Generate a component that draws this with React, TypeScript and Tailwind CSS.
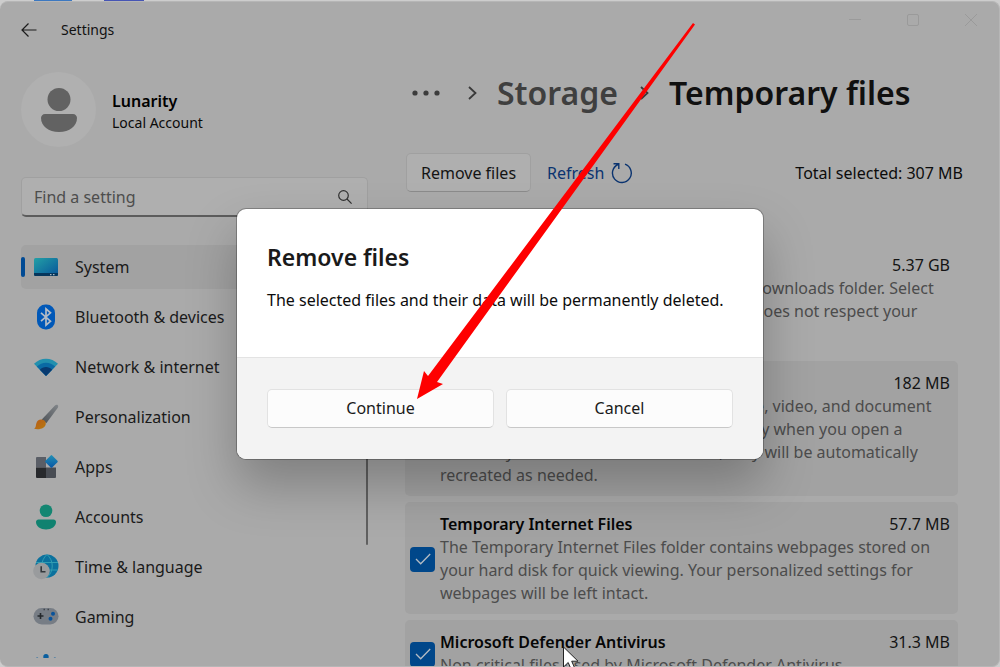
import type { ReactNode } from 'react';
import { useState } from 'react';

type TempFile = {
  id: string;
  name: string;
  size: string;
  lines: string[];
};

const files: TempFile[] = [
  {
    id: 'downloads',
    name: 'Downloads',
    size: '5.37 GB',
    lines: [
      'Warning: These are files in your personal Downloads folder. Select',
      "this if you'd like to delete everything. This does not respect your",
      'Storage Sense configuration.',
    ],
  },
  {
    id: 'thumbnails',
    name: 'Thumbnails',
    size: '182 MB',
    lines: [
      'Windows keeps copies of all of your picture, video, and document',
      'thumbnails so they can be displayed quickly when you open a',
      'folder. If you delete these thumbnails, they will be automatically',
      'recreated as needed.',
    ],
  },
  {
    id: 'internet',
    name: 'Temporary Internet Files',
    size: '57.7 MB',
    lines: [
      'The Temporary Internet Files folder contains webpages stored on',
      'your hard disk for quick viewing. Your personalized settings for',
      'webpages will be left intact.',
    ],
  },
  {
    id: 'defender',
    name: 'Microsoft Defender Antivirus',
    size: '31.3 MB',
    lines: ['Non critical files used by Microsoft Defender Antivirus'],
  },
];

const SystemIcon = () => (
  <svg viewBox="0 0 26 26" className="size-[26px]">
    <defs>
      <linearGradient id="sys" x1="0" y1="0" x2="1" y2="1">
        <stop offset="0" stopColor="#23a0a6" />
        <stop offset="1" stopColor="#07549a" />
      </linearGradient>
    </defs>
    <rect x="1" y="4" width="24" height="18" rx="1.5" fill="url(#sys)" />
    <path d="M1 19h24v1.5a1.5 1.5 0 0 1-1.5 1.5h-21A1.5 1.5 0 0 1 1 20.500z" fill="#06365c" />
    <path d="M17 20h1.500v1.200H17zM20 20h1.500v1.200H20z" fill="#a9b8c2" />
  </svg>
);

const BluetoothIcon = () => (
  <svg viewBox="0 0 26 26" className="size-[26px]">
    <rect x="4" y="0.500" width="18" height="25" rx="8.500" fill="#0058b8" />
    <path d="M8 8.800l9.500 8.400-4.500 4V4.800l4.500 4-9.500 8.400" fill="none" stroke="#b4bcc6" strokeWidth="1.700" />
  </svg>
);

const NetworkIcon = () => (
  <svg viewBox="0 0 26 26" className="size-[26px]">
    <path d="M13 22L1 9.800C7.500 2.900 18.500 2.900 25 9.800z" fill="#2290ae" />
    <path d="M13 22L3.800 12.600C9 7.300 17 7.300 22.200 12.600z" fill="#0a6aa4" />
    <path d="M13 22L6.800 15.700C10.300 12.200 15.700 12.200 19.200 15.700z" fill="#083a70" />
  </svg>
);

const BrushIcon = () => (
  <svg viewBox="0 0 26 26" className="size-[26px]">
    <defs>
      <linearGradient id="handle" x1="1" y1="0" x2="0" y2="1">
        <stop offset="0" stopColor="#818589" />
        <stop offset="1" stopColor="#4d5257" />
      </linearGradient>
      <linearGradient id="bristle" x1="0" y1="0" x2="1" y2="1">
        <stop offset="0" stopColor="#b85a18" />
        <stop offset="1" stopColor="#b67a10" />
      </linearGradient>
    </defs>
    <path d="M24.800 1.200c.6.700.5 1.700 0 2.500L13.300 19.200 8.800 15.500 22 1.500c.8-.8 2.100-1 2.800-.3z" fill="url(#handle)" />
    <path d="M8.600 15.400c2.600.2 4.300 1.900 4.200 4.300C12.500 23.900 7 26.200 1 24.800c1.900-1.100 1.700-3.100 2.300-5.400.7-2.600 2.600-4.200 5.300-4z" fill="url(#bristle)" />
  </svg>
);

const AppsIcon = () => (
  <svg viewBox="0 0 26 26" className="size-[26px]">
    <defs>
      <linearGradient id="diamond" x1="0" y1="0" x2="1" y2="1">
        <stop offset="0" stopColor="#2391b5" />
        <stop offset="1" stopColor="#0755a5" />
      </linearGradient>
    </defs>
    <path d="M4 3h9v10.500H3V4a1 1 0 0 1 1-1z" fill="#5a5e66" />
    <path d="M3 13.500h10V24H4a1 1 0 0 1-1-1z" fill="#27292c" />
    <path d="M13 13.500h10V23a1 1 0 0 1-1 1h-9z" fill="#484c53" />
    <rect x="13.700" y="2.700" width="9.500" height="9.500" rx="1" fill="url(#diamond)" transform="rotate(45 18.450 7.450)" />
  </svg>
);

const AccountsIcon = () => (
  <svg viewBox="0 0 26 26" className="size-[26px]">
    <circle cx="13" cy="6.700" r="6.300" fill="#148672" />
    <path d="M5.500 15.500h15c1.400 0 2.500 1.100 2.500 2.500 0 4.500-4.500 7.500-10 7.500S3 22.500 3 18c0-1.400 1.100-2.500 2.500-2.500z" fill="#108270" />
  </svg>
);

const TimeIcon = () => (
  <svg viewBox="0 0 26 26" className="size-[26px]">
    <circle cx="14" cy="12" r="11.500" fill="#0b719d" />
    <path d="M3 8.500h22M3.500 16h21M14 .5c-7 6-7 17 0 23M14 .5c7 6 7 17 0 23" fill="none" stroke="#319db2" strokeWidth="1" />
    <circle cx="8.500" cy="17" r="8.300" fill="#999b9d" />
    <path d="M8.200 12.200v5.500H12.500" fill="none" stroke="#33383c" strokeWidth="1.600" />
  </svg>
);

const GamingIcon = () => (
  <svg viewBox="0 0 26 26" className="size-[26px]">
    <rect x="0.500" y="4" width="25" height="16.500" rx="8.250" fill="#777d85" />
    <path d="M7.500 9v6M4.500 12h6" stroke="#24282c" strokeWidth="1.600" />
    <path d="M10.500 5.500h1.500M14.500 5.500h1.500" stroke="#40454b" strokeWidth="1.300" />
    <circle cx="20" cy="9.800" r="2" fill="#0a539b" />
    <circle cx="17.500" cy="14.800" r="2" fill="#0a539b" />
  </svg>
);

const AccessibilityIcon = () => (
  <svg viewBox="0 0 26 26" className="size-[26px]">
    <circle cx="13" cy="2.800" r="2.700" fill="#0a5f9f" />
    <path d="M4 4.800l8.500 4h1l8.500-4" fill="none" stroke="#0a5f9f" strokeWidth="2.600" strokeLinecap="round" />
    <path d="M13 8v7l-4 8M13 15l4 8" fill="none" stroke="#0a5f9f" strokeWidth="3" strokeLinecap="round" />
  </svg>
);

const nav: { label: string; icon: ReactNode }[] = [
  { label: 'System', icon: <SystemIcon /> },
  { label: 'Bluetooth & devices', icon: <BluetoothIcon /> },
  { label: 'Network & internet', icon: <NetworkIcon /> },
  { label: 'Personalization', icon: <BrushIcon /> },
  { label: 'Apps', icon: <AppsIcon /> },
  { label: 'Accounts', icon: <AccountsIcon /> },
  { label: 'Time & language', icon: <TimeIcon /> },
  { label: 'Gaming', icon: <GamingIcon /> },
  { label: 'Accessibility', icon: <AccessibilityIcon /> },
];

function TitleBar() {
  return (
    <header className="flex h-[58px] shrink-0 items-start justify-between px-[21px]">
      <div className="flex h-14 items-center gap-6">
        <button aria-label="Back" className="text-[#1c1c1c]">
          <svg viewBox="0 0 16 16" className="size-4" fill="none" stroke="currentColor" strokeWidth="1.200">
            <path d="M15.500 8H1M7.500 1.500L1 8l6.500 6.500" />
          </svg>
        </button>
        <span className="text-sm text-[#111]">Settings</span>
      </div>
      <div className="flex gap-11 pt-[11px] text-[#9a9a9a]">
        <button aria-label="Minimize">
          <svg viewBox="0 0 14 14" className="size-[14px]" stroke="currentColor"><path d="M1 6.500h12" /></svg>
        </button>
        <button aria-label="Maximize">
          <svg viewBox="0 0 14 14" className="size-[14px]" fill="none" stroke="currentColor">
            <rect x="1.500" y="1.500" width="11" height="11" rx="1.500" />
          </svg>
        </button>
        <button aria-label="Close">
          <svg viewBox="0 0 14 14" className="size-[14px]" stroke="currentColor"><path d="M1 1l12 12M13 1L1 13" /></svg>
        </button>
      </div>
    </header>
  );
}

function Sidebar() {
  return (
    <aside className="flex w-[368px] shrink-0 flex-col pb-2 pl-[21px] pt-3">
      <div className="flex items-center gap-4">
        <div className="flex size-[75px] items-center justify-center rounded-full bg-[#b0b0b0]">
          <svg viewBox="0 0 36 44" className="h-11 w-9" fill="#626262">
            <circle cx="18" cy="11.500" r="11.500" />
            <path d="M4 26h28c2.200 0 4 1.800 4 4 0 8-7.500 14-18 14S0 38 0 30c0-2.200 1.800-4 4-4z" />
          </svg>
        </div>
        <div className="pt-1">
          <p className="text-base font-semibold leading-[21px] text-black">Lunarity</p>
          <p className="text-sm leading-[21px] text-[#0b0b0b]">Local Account</p>
        </div>
      </div>

      <div className="mt-[30px] flex h-10 shrink-0 items-center rounded-[5px] border border-b-2 border-[#a0a0a0] border-b-[#5c5c5c] bg-[#afafaf] pl-3 pr-[15px]">
        <input
          type="text"
          aria-label="Find a setting"
          placeholder="Find a setting"
          className="min-w-0 flex-1 bg-transparent text-base text-[#222] outline-none placeholder:text-[#4d4d4d]"
        />
        <svg viewBox="0 0 14 14" className="size-[14px] text-[#303030]" fill="none" stroke="currentColor" strokeWidth="1.200">
          <circle cx="5.500" cy="5.500" r="4.800" />
          <path d="M9 9l4.600 4.600" />
        </svg>
      </div>

      <nav className="mt-7 flex min-h-0 flex-1 overflow-hidden">
        <ul className="flex flex-1 flex-col gap-[6px]">
          {nav.map((item, i) => (
            <li key={item.label}>
              <a
                href="#"
                aria-current={i === 0 ? 'page' : undefined}
                className={`flex h-11 items-center rounded-[5px] text-base text-[#1a1a1a] ${i === 0 ? 'bg-[#a2a2a2]' : ''}`}
              >
                <span className={`mr-2 h-5 w-1 rounded-full ${i === 0 ? 'bg-[#004a94]' : ''}`} />
                {item.icon}
                <span className="ml-4">{item.label}</span>
              </a>
            </li>
          ))}
        </ul>
        <div className="ml-2 h-[300px] w-[2px] rounded-full bg-[#606060]" />
      </nav>
    </aside>
  );
}

function FileRow({ file, checked, onToggle }: { file: TempFile; checked: boolean; onToggle: () => void }) {
  return (
    <label
      className={`flex items-center gap-[5px] rounded-[5px] pb-[9px] pl-[5px] pr-2 pt-[11px] ${checked ? 'bg-[#a2a2a2]' : ''}`}
    >
      <span className="grid size-[25px] shrink-0 place-items-center">
        <input
          type="checkbox"
          checked={checked}
          onChange={onToggle}
          className="col-start-1 row-start-1 size-[25px] appearance-none rounded-[4px] border border-[#606060] checked:border-0 checked:bg-[#00478a]"
        />
        {checked && (
          <svg viewBox="0 0 16 12" className="pointer-events-none col-start-1 row-start-1 h-3 w-4" fill="none" stroke="#b4bcc4" strokeWidth="1.300">
            <path d="M1 6l4.700 4.800L15.200 1" />
          </svg>
        )}
      </span>
      <span className="min-w-0 flex-1 text-base leading-[23px]">
        <span className="flex justify-between">
          <span className="font-semibold text-[#060606]">{file.name}</span>
          <span className="text-[#141414]">{file.size}</span>
        </span>
        {file.lines.map((line) => (
          <span key={line} className="block whitespace-nowrap text-[#4c4c4c]">{line}</span>
        ))}
      </span>
    </label>
  );
}

function RemoveDialog() {
  return (
    <div className="absolute inset-0 flex items-center justify-center">
      <div
        role="dialog"
        aria-labelledby="dialog-title"
        className="w-full max-w-[526px] overflow-hidden rounded-[9px] bg-white shadow-[0_0_0_1px_rgba(0,0,0,0.25),0_26px_50px_rgba(0,0,0,0.25)]"
      >
        <div className="px-[30px] pb-[45px] pt-8">
          <h2 id="dialog-title" className="text-[23px] font-semibold leading-8 text-[#1a1a1a]">Remove files</h2>
          <p className="mt-[15px] whitespace-nowrap text-base leading-6 text-[#0c0c0c]">
            The selected files and their data will be permanently deleted.
          </p>
        </div>
        <div className="flex gap-3 border-t border-[#e3e3e3] bg-[#f3f3f3] px-[30px] py-[31px] text-base text-[#1a1a1a]">
          <button className="h-[39px] flex-1 rounded-[5px] border border-[#e2e2e2] border-b-[#c8c8c8] bg-[#fcfcfc]">Continue</button>
          <button className="h-[39px] flex-1 rounded-[5px] border border-[#e2e2e2] border-b-[#c8c8c8] bg-[#fcfcfc]">Cancel</button>
        </div>
      </div>
    </div>
  );
}

export default function App() {
  const [selected, setSelected] = useState(['thumbnails', 'internet', 'defender']);

  const toggle = (id: string) => {
    setSelected((prev) => (prev.includes(id) ? prev.filter((x) => x !== id) : [...prev, id]));
  };

  return (
    <div className="relative flex h-screen flex-col overflow-hidden bg-[#cdcdcd] font-['Noto_Sans',sans-serif]">
      {/* Sliver of the window behind */}
      <div className="flex h-px shrink-0 gap-8 pl-[34px]">
        <span className="w-[38px] bg-[#3c78c0]" />
        <span className="w-[40px] bg-[#4655b4]" />
      </div>

      <div className="flex min-h-0 flex-1 flex-col overflow-hidden rounded-lg border-y border-r border-[#b6b6b6] bg-[#aaaaaa]">
        <TitleBar />
        <div className="flex min-h-0 flex-1">
          <Sidebar />
          <main className="min-w-0 flex-1 pl-[37px] pr-9">
            <nav aria-label="Breadcrumb" className="flex h-[66px] items-center text-[32px] font-semibold leading-10">
              <button aria-label="More" className="ml-[7px] text-[#3c3c3c]">
                <svg viewBox="0 0 28 6" className="h-[6px] w-7" fill="currentColor">
                  <circle cx="3" cy="3" r="2.600" />
                  <circle cx="14" cy="3" r="2.600" />
                  <circle cx="25" cy="3" r="2.600" />
                </svg>
              </button>
              <svg viewBox="0 0 9 14" className="ml-7 h-[14px] w-[9px]" fill="none" stroke="#3a3a3a" strokeWidth="1.800">
                <path d="M1 1l6.500 6L1 13" />
              </svg>
              <a href="#" className="ml-5 text-[#3f3f3f]">Storage</a>
              <svg viewBox="0 0 9 14" className="ml-[22px] h-[14px] w-[9px]" fill="none" stroke="#3a3a3a" strokeWidth="1.800">
                <path d="M1 1l6.500 6L1 13" />
              </svg>
              <h1 className="ml-5 whitespace-nowrap text-[#101010]">Temporary files</h1>
            </nav>

            <div className="mt-[27px] flex items-center">
              <button className="ml-px h-[39px] rounded-[5px] border border-[#a0a0a0] border-b-[#8c8c8c] bg-[#afafaf] px-[14px] text-base text-[#141414]">
                Remove files
              </button>
              <button className="ml-4 flex items-center gap-[7px] text-base text-[#0b3470]">
                Refresh
                <svg viewBox="0 0 22 22" className="size-[22px]" fill="none" stroke="currentColor" strokeWidth="1.400">
                  <path d="M14 2.200A9.400 9.400 0 1 1 7 2.500M2.500 1.800h5.300v5.300" />
                </svg>
              </button>
              <p className="ml-auto text-base text-[#0c0c0c]">Total selected: 307 MB</p>
            </div>

            <div className="mr-[5px] mt-[51px] flex flex-col gap-[6px]">
              {files.map((file) => (
                <FileRow key={file.id} file={file} checked={selected.includes(file.id)} onToggle={() => toggle(file.id)} />
              ))}
            </div>
          </main>
        </div>
      </div>

      <RemoveDialog />

      {/* Arrow pointing at Continue */}
      <svg viewBox="0 0 280 378" className="pointer-events-none absolute left-[416px] top-[22px] h-[378px] w-[280px]" fill="#fe0000">
        <path d="M277 1l2 1.500L21 360l6 2L1 377l7-28 4 5z" />
      </svg>

      {/* Mouse pointer */}
      <svg viewBox="0 0 18 26" className="pointer-events-none absolute left-[562px] top-[646px] h-[26px] w-[18px]">
        <path d="M1.500 1v20l4.700-4.500 3 7 3.500-1.500-3-6.800h6.300z" fill="#fff" stroke="#222" strokeWidth="1" />
      </svg>
    </div>
  );
}
